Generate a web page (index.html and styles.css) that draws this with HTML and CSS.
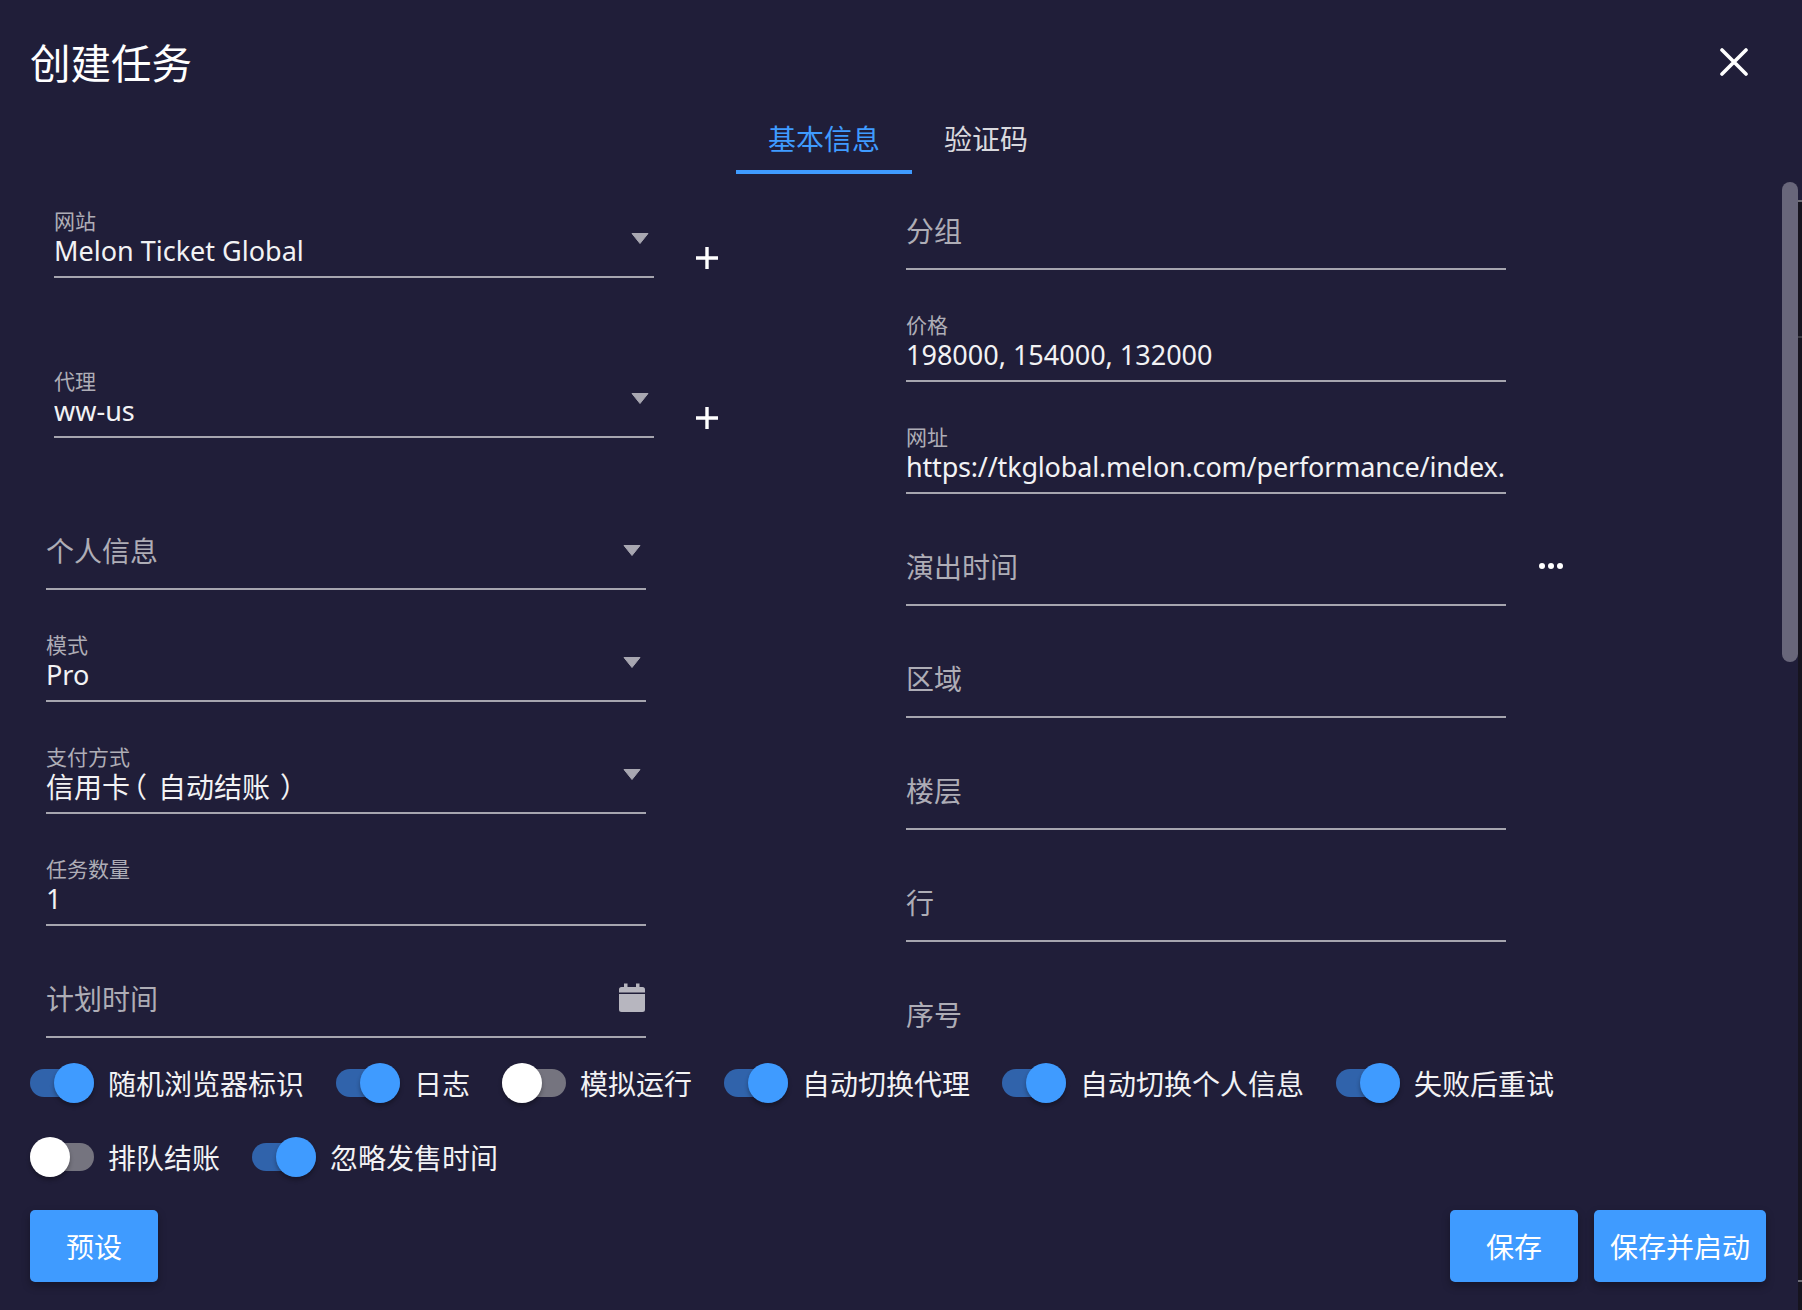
FILE: index.html
```html
<!DOCTYPE html>
<html lang="zh">
<head>
<meta charset="utf-8">
<title>创建任务</title>
<link rel="stylesheet" href="styles.css">
</head>
<body>
<div class="dialog">
  <header class="head">
    <h1 class="title">创建任务</h1>
    <svg class="close" viewBox="0 0 28 28"><path d="M2 2L26 26M26 2L2 26"/></svg>
  </header>
  <nav class="tabs">
    <div class="tab tab-active">基本信息</div>
    <div class="tab">验证码</div>
  </nav>
  <main class="body">
    <section class="col">
      <div class="row row-first">
        <div class="field field-fill">
          <div class="label">网站</div><div class="value value-latin">Melon Ticket Global</div>
          <svg class="arrow" viewBox="0 0 18 11"><path d="M1 0.5H17L9 10.5Z"/></svg>
        </div>
        <svg class="plus" viewBox="0 0 22 22"><path d="M11 0V22M0 11H22"/></svg>
      </div>
      <div class="row row-second">
        <div class="field field-fill">
          <div class="label">代理</div><div class="value value-latin">ww-us</div>
          <svg class="arrow" viewBox="0 0 18 11"><path d="M1 0.5H17L9 10.5Z"/></svg>
        </div>
        <svg class="plus" viewBox="0 0 22 22"><path d="M11 0V22M0 11H22"/></svg>
      </div>
      <div class="field field-third">
        <div class="placeholder">个人信息</div>
        <svg class="arrow" viewBox="0 0 18 11"><path d="M1 0.5H17L9 10.5Z"/></svg>
      </div>
      <div class="field">
        <div class="label">模式</div><div class="value value-latin">Pro</div>
        <svg class="arrow" viewBox="0 0 18 11"><path d="M1 0.5H17L9 10.5Z"/></svg>
      </div>
      <div class="field">
        <div class="label">支付方式</div><div class="value">信用卡<span class="paren paren-open">（</span>自动结账<span class="paren paren-close">）</span></div>
        <svg class="arrow" viewBox="0 0 18 11"><path d="M1 0.5H17L9 10.5Z"/></svg>
      </div>
      <div class="field">
        <div class="label">任务数量</div><div class="value value-latin">1</div>
      </div>
      <div class="field">
        <div class="placeholder">计划时间</div>
        <svg class="calendar" viewBox="0 0 26 29"><path d="M5 0.5H8.500V4H17V0.500H20.500V4H23.500A2.500 2.500 0 0 1 26 6.500V9.500H0V6.500A2.500 2.500 0 0 1 2.500 4H5ZM0 11H26V26.500A2.500 2.500 0 0 1 23.500 29H2.500A2.500 2.500 0 0 1 0 26.500Z"/></svg>
      </div>
    </section>
    <section class="col">
      <div class="field field-top"><div class="placeholder">分组</div></div>
      <div class="field"><div class="label">价格</div><div class="value value-latin">198000, 154000, 132000</div></div>
      <div class="field"><div class="label">网址</div><div class="value value-latin value-url">https://tkglobal.melon.com/performance/index.</div></div>
      <div class="row">
        <div class="field"><div class="placeholder">演出时间</div></div>
        <div class="dots"><span></span><span></span><span></span></div>
      </div>
      <div class="field"><div class="placeholder">区域</div></div>
      <div class="field"><div class="placeholder">楼层</div></div>
      <div class="field"><div class="placeholder">行</div></div>
      <div class="field"><div class="placeholder">序号</div></div>
    </section>
  </main>
  <section class="switches">
    <label class="switch on"><span class="track"></span><span class="knob"></span><span class="name">随机浏览器标识</span></label>
    <label class="switch on"><span class="track"></span><span class="knob"></span><span class="name">日志</span></label>
    <label class="switch"><span class="track"></span><span class="knob"></span><span class="name">模拟运行</span></label>
    <label class="switch on"><span class="track"></span><span class="knob"></span><span class="name">自动切换代理</span></label>
    <label class="switch on"><span class="track"></span><span class="knob"></span><span class="name">自动切换个人信息</span></label>
    <label class="switch on"><span class="track"></span><span class="knob"></span><span class="name">失败后重试</span></label>
    <label class="switch"><span class="track"></span><span class="knob"></span><span class="name">排队结账</span></label>
    <label class="switch on"><span class="track"></span><span class="knob"></span><span class="name">忽略发售时间</span></label>
  </section>
  <footer class="actions">
    <button class="btn">预设</button>
    <div class="actions-right">
      <button class="btn">保存</button>
      <button class="btn btn-wide">保存并启动</button>
    </div>
  </footer>
  <div class="scrollbar"></div>
  <div class="edge"></div>
</div>
</body>
</html>
```
FILE: styles.css
```css
* { box-sizing: border-box; }
html, body { margin: 0; padding: 0; }
body {
  width: 1802px;
  height: 1310px;
  overflow: hidden;
  background: #201e39;
  color: #f2f2f4;
  font-family: "Noto Sans", "Noto Sans CJK SC", sans-serif;
}
.dialog {
  position: relative;
  width: 1802px;
  height: 1310px;
  display: flex;
  flex-direction: column;
}
.head {
  height: 116px;
  flex: none;
  display: flex;
  justify-content: space-between;
  align-items: flex-start;
  padding: 39px 54px 0 30px;
}
.title {
  margin: 0;
  font-size: 40.5px;
  line-height: 50px;
  font-weight: 400;
  color: #fff;
}
.close { width: 28px; height: 28px; margin-top: 9px; }
.close path { stroke: #fff; stroke-width: 3.6; fill: none; stroke-linecap: round; }
.tabs {
  flex: none;
  height: 58px;
  display: flex;
  justify-content: center;
  padding-right: 6px;
}
.tab {
  padding: 3px 32px 0;
  height: 58px;
  font-size: 28px;
  line-height: 40px;
  color: #d9d9de;
}
.tab-active {
  color: #3f9bff;
  border-bottom: 4px solid #3f9bff;
}
.body {
  flex: none;
  height: 874px;
  padding: 2px 0 0 46px;
  overflow: hidden;
  display: grid;
  grid-template-columns: 860px 680px;
  align-items: start;
}
.col { display: flex; flex-direction: column; }
.row { display: flex; align-items: flex-start; }
.row-first { margin-left: 8px; height: 102px; }
.row-second { margin-left: 8px; height: 160px; }
.field {
  position: relative;
  flex: none;
  width: 600px;
  height: 112px;
  display: flex;
  flex-direction: column;
  justify-content: flex-end;
  padding-bottom: 5px;
  border-bottom: 2px solid #a6a5af;
}
.field-fill { height: 100%; }
.field-third { height: 152px; }
.field-top { height: 94px; }
.label {
  font-size: 21px;
  line-height: 20px;
  color: #aeadb6;
}
.value {
  font-size: 28px;
  line-height: 40px;
  color: #f2f2f4;
  white-space: nowrap;
  overflow: hidden;
}
.value-latin { font-size: 27px; }
.value-url { letter-spacing: -0.18px; }
.paren { font-feature-settings: "halt"; }
.paren-open { padding: 0 11px 0 3px; }
.paren-close { padding: 0 4px 0 10px; }
.placeholder {
  font-size: 28px;
  line-height: 40px;
  margin-bottom: 12px;
  color: #aeadb6;
}
.arrow {
  position: absolute;
  right: 5px;
  bottom: 32px;
  width: 18px;
  height: 11px;
}
.arrow path { fill: #a8a7b1; stroke: #a8a7b1; stroke-width: 1; stroke-linejoin: round; }
.plus {
  width: 22px;
  height: 22px;
  margin: 71px 0 0 42px;
  flex: none;
}
.plus path { stroke: #fff; stroke-width: 3.4; fill: none; stroke-linecap: round; }
.row-second .plus { margin-top: 129px; }
.calendar {
  position: absolute;
  right: 1px;
  bottom: 24px;
  width: 26px;
  height: 29px;
}
.calendar path { fill: #b7b6bf; }
.dots { display: flex; gap: 3px; margin: 69px 0 0 33px; }
.dots span { width: 6px; height: 6px; border-radius: 50%; background: #fff; }
.switches {
  flex: none;
  display: flex;
  flex-wrap: wrap;
  align-content: flex-start;
  gap: 34px 32px;
  padding: 15px 200px 0 30px;
  height: 162px;
}
.switch {
  position: relative;
  display: flex;
  align-items: center;
  height: 40px;
  padding-left: 78px;
}
.track {
  position: absolute;
  left: 0;
  top: 6px;
  width: 64px;
  height: 28px;
  border-radius: 14px;
  background: #75747f;
}
.knob {
  position: absolute;
  left: 0;
  top: 0;
  width: 40px;
  height: 40px;
  border-radius: 50%;
  background: #fff;
  box-shadow: 0 3px 4px rgba(0,0,0,.3);
}
.switch.on .track { background: #3063ab; }
.switch.on .knob { left: 24px; background: #3f9bff; }
.name {
  font-size: 28px;
  line-height: 40px;
  padding-top: 2px;
  color: #f2f2f4;
  white-space: nowrap;
}
.actions {
  flex: none;
  display: flex;
  justify-content: space-between;
  padding: 0 36px 0 30px;
}
.actions-right { display: flex; gap: 16px; }
.btn {
  width: 128px;
  height: 72px;
  border: 0;
  border-radius: 5px;
  background: #3f9bff;
  color: #fff;
  font: inherit;
  font-size: 28px;
  box-shadow: 0 4px 8px rgba(0,0,0,.3);
}
.btn-wide { width: 172px; }
.scrollbar {
  position: absolute;
  left: 1782px;
  top: 182px;
  width: 16px;
  height: 480px;
  border-radius: 8px;
  background: #68667a;
}
.edge {
  position: absolute;
  right: 0;
  top: 200px;
  width: 4px;
  height: 1110px;
  background: #16141f;
  border-top: 2px solid #6e6d76;
}
.edge::before {
  content: "";
  display: block;
  height: 2px;
  margin-top: 134px;
  background: #3a3942;
}
.edge::after {
  content: "";
  display: block;
  height: 2px;
  margin-top: 942px;
  background: #6e6d76;
}
```
